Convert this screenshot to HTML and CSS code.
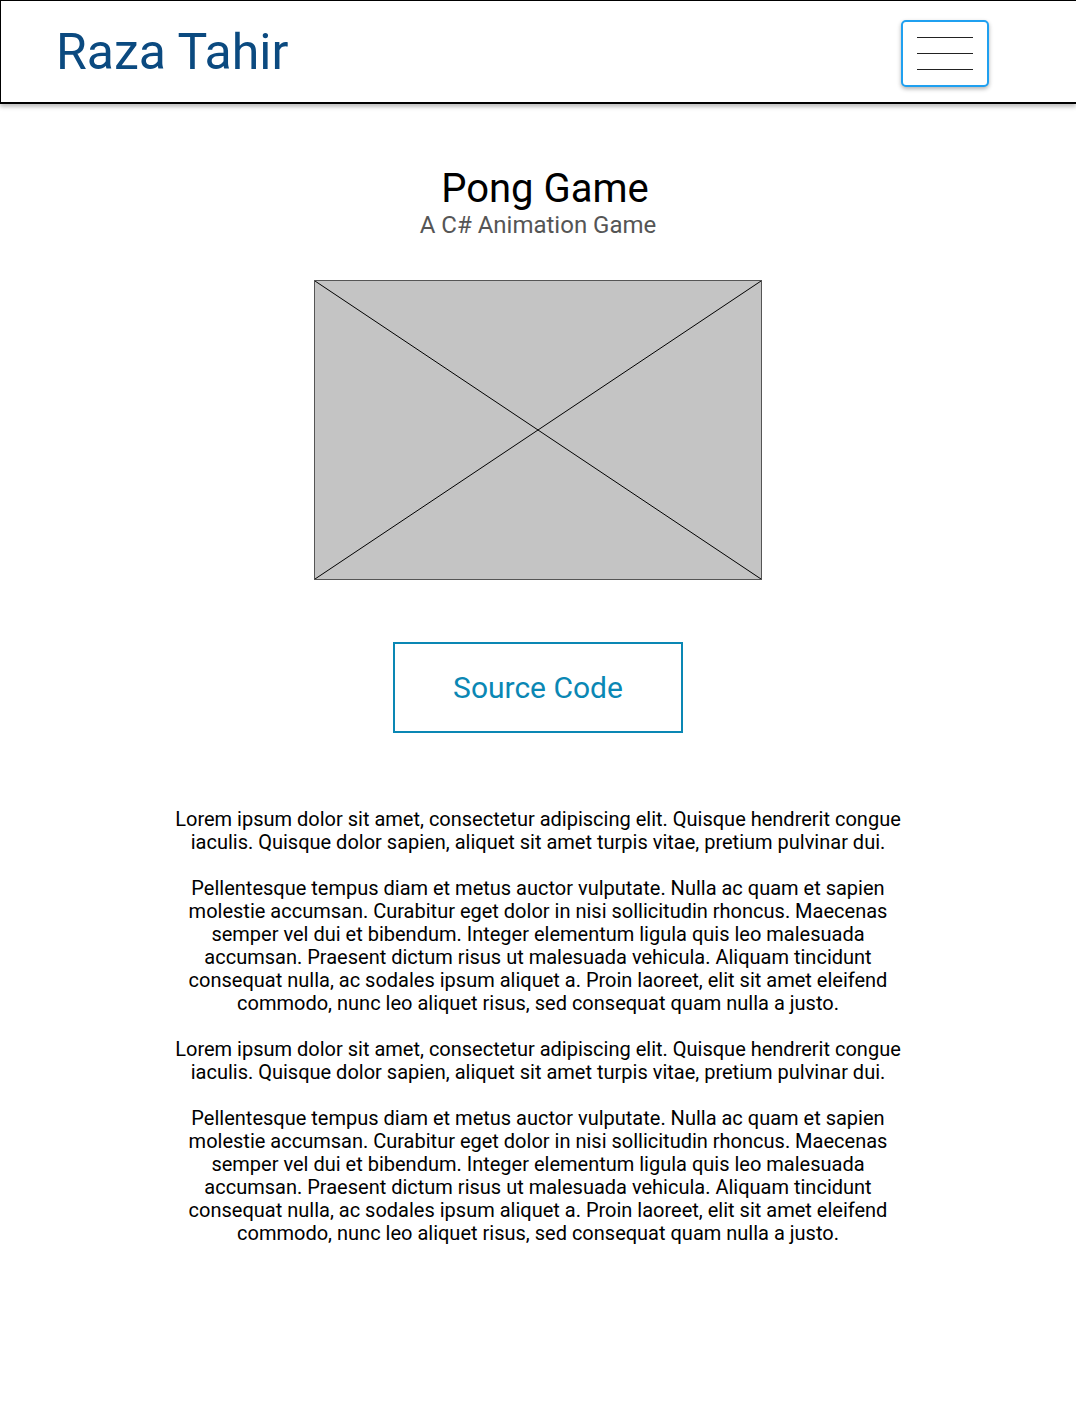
FILE: index.html
```html
<!DOCTYPE html>
<html>
<head>
<meta charset="utf-8">
<link rel="stylesheet" href="styles.css">
</head>
<body>
<header class="topbar">
  <div class="brand">Raza Tahir</div>
  <button class="menu-btn" aria-label="Menu">
    <span class="bar"></span>
    <span class="bar"></span>
    <span class="bar"></span>
  </button>
</header>
<main class="content">
  <h1 class="title">Pong Game</h1>
  <p class="subtitle">A C# Animation Game</p>
  <div class="placeholder">
    <svg viewBox="0 0 446 298" preserveAspectRatio="none" class="cross">
      <line x1="0" y1="0" x2="446" y2="298"/>
      <line x1="446" y1="0" x2="0" y2="298"/>
    </svg>
  </div>
  <a class="source-btn" href="#">Source Code</a>
  <div class="text">
    <p>Lorem ipsum dolor sit amet, consectetur adipiscing elit. Quisque hendrerit congue iaculis. Quisque dolor sapien, aliquet sit amet turpis vitae, pretium pulvinar dui.</p>
    <p>Pellentesque tempus diam et metus auctor vulputate. Nulla ac quam et sapien molestie accumsan. Curabitur eget dolor in nisi sollicitudin rhoncus. Maecenas semper vel dui et bibendum. Integer elementum ligula quis leo malesuada accumsan. Praesent dictum risus ut malesuada vehicula. Aliquam tincidunt consequat nulla, ac sodales ipsum aliquet a. Proin laoreet, elit sit amet eleifend commodo, nunc leo aliquet risus, sed consequat quam nulla a justo.</p>
    <p>Lorem ipsum dolor sit amet, consectetur adipiscing elit. Quisque hendrerit congue iaculis. Quisque dolor sapien, aliquet sit amet turpis vitae, pretium pulvinar dui.</p>
    <p>Pellentesque tempus diam et metus auctor vulputate. Nulla ac quam et sapien molestie accumsan. Curabitur eget dolor in nisi sollicitudin rhoncus. Maecenas semper vel dui et bibendum. Integer elementum ligula quis leo malesuada accumsan. Praesent dictum risus ut malesuada vehicula. Aliquam tincidunt consequat nulla, ac sodales ipsum aliquet a. Proin laoreet, elit sit amet eleifend commodo, nunc leo aliquet risus, sed consequat quam nulla a justo.</p>
  </div>
</main>
</body>
</html>
```

FILE: styles.css
```css
* { box-sizing: border-box; }
html, body {
  margin: 0;
  padding: 0;
  background: #fff;
  font-family: Roboto, "Liberation Sans", sans-serif;
  color: #000;
}
.topbar {
  height: 104px;
  border: 1px solid #000;
  border-right: none;
  border-bottom-width: 2px;
  box-shadow: 0 3px 4px rgba(0,0,0,0.25);
  display: flex;
  align-items: center;
  justify-content: space-between;
  padding: 0 87px 0 55px;
}
.brand {
  font-size: 50px;
  color: #0b4a80;
  line-height: 1;
  margin-top: 0;
}
.menu-btn {
  width: 88px;
  height: 67px;
  border: 2px solid #1fa0f0;
  border-radius: 5px;
  background: #fff;
  box-shadow: 0 2px 4px rgba(0,0,0,0.3);
  display: flex;
  flex-direction: column;
  align-items: center;
  justify-content: center;
  gap: 15px;
  padding: 0;
  margin-top: 3px;
}
.menu-btn .bar {
  display: block;
  width: 56px;
  height: 1px;
  background: #222;
}
.content {
  display: flex;
  flex-direction: column;
  align-items: center;
  padding-top: 61px;
}
.title {
  margin: 0 0 0 14px;
  font-weight: 400;
  font-size: 40px;
  line-height: 47px;
}
.subtitle {
  margin: 0;
  font-size: 24px;
  line-height: 27px;
  color: #555;
}
.placeholder {
  margin-top: 41px;
  width: 448px;
  height: 300px;
  background: #c4c4c4;
  border: 1px solid #555;
}
.cross {
  display: block;
  width: 100%;
  height: 100%;
}
.cross line {
  stroke: #000;
  stroke-width: 1;
}
.source-btn {
  margin-top: 62px;
  width: 290px;
  height: 91px;
  border: 2px solid #0a87b4;
  display: flex;
  align-items: center;
  justify-content: center;
  color: #0a87b4;
  text-decoration: none;
  font-size: 30px;
}
.text {
  margin-top: 75px;
  width: 740px;
  text-align: center;
  font-size: 20px;
  line-height: 23px;
}
.text p {
  margin: 0 0 23px;
}
```
